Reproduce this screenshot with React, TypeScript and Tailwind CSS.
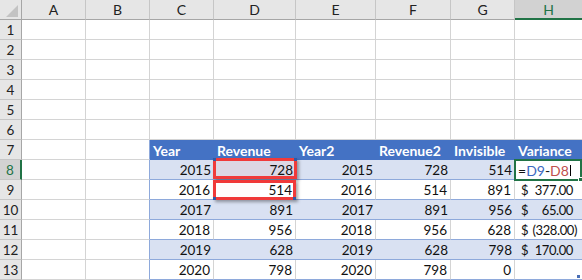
import React from "react";

type Kind = "plain" | "tblLeft" | "thead" | "band" | "white" | "d8" | "d9" | "h8";

const rows: (string | null)[][] = [
  ["Year", "Revenue", "Year2", "Revenue2", "Invisible", "Variance"],
  ["2015", "728", "2015", "728", "514", "EDIT"],
  ["2016", "514", "2016", "514", "891", "377.00"],
  ["2017", "891", "2017", "891", "956", "65.00"],
  ["2018", "956", "2018", "956", "628", "-328.00"],
  ["2019", "628", "2019", "628", "798", "170.00"],
  ["2020", "798", "2020", "798", "0", null],
];

const letters = ["A", "B", "C", "D", "E", "F", "G", "H"];

function cellClass(kind: Kind, last: boolean): string {
  switch (kind) {
    case "plain":
      return last
        ? "bg-white border-b border-[#d4d4d4]"
        : "bg-white border-r border-b border-[#d4d4d4]";
    case "tblLeft":
      return "bg-white border-b border-b-[#d4d4d4] border-r border-r-[#8ea9db]";
    case "thead":
      return "bg-[#4472c4] text-white text-[14px] font-bold justify-start pl-[3px]";
    case "band":
      return "bg-[#d9e1f2] border-b border-[#8ea9db] justify-end pr-[3px]";
    case "white":
      return last
        ? "bg-white border-b border-[#8ea9db] justify-end pr-[3px]"
        : "bg-white border-b border-b-[#8ea9db] border-r border-r-[#d4d4d4] justify-end pr-[3px]";
    case "d8":
      return "relative bg-[#dcd7e4] border-b border-[#8ea9db] justify-end pr-[3px]";
    case "d9":
      return "relative bg-white border-b border-b-[#8ea9db] border-r border-r-[#d4d4d4] justify-end pr-[3px]";
    case "h8":
      return "relative bg-white border-b border-[#8ea9db] justify-start pl-[3px]";
  }
}

function Money({ v }: { v: string }) {
  const neg = v.startsWith("-");
  const num = neg ? v.slice(1) : v;
  return (
    <div className="flex w-full items-center justify-between pl-[6px] pr-[2px] text-[13px] tracking-[-0.4px]">
      <span>$</span>
      {neg ? <span>({num})</span> : <span className="pr-[4px]">{num}</span>}
    </div>
  );
}

function RedBox({ top }: { top: boolean }) {
  return (
    <div
      className={
        top
          ? "absolute -left-px -right-px -top-[2px] bottom-0 border-[3px] border-[#f03a3a] shadow-[2px_2px_3px_rgba(0,0,0,0.35)]"
          : "absolute -left-px -right-px top-0 -bottom-px border-[3px] border-[#f03a3a] shadow-[2px_2px_3px_rgba(0,0,0,0.35)]"
      }
    >
      <div
        className={
          top
            ? "absolute -left-[3px] -top-[3px] h-[3px] w-[3px] bg-[#2e5aa8]"
            : "absolute -left-[3px] -bottom-[3px] h-[3px] w-[3px] bg-[#2e5aa8]"
        }
      />
      <div
        className={
          top
            ? "absolute -right-[3px] -top-[3px] h-[3px] w-[3px] bg-[#2e5aa8]"
            : "absolute -right-[3px] -bottom-[3px] h-[3px] w-[3px] bg-[#2e5aa8]"
        }
      />
    </div>
  );
}

export default function App() {
  const cells: React.ReactNode[] = [];

  cells.push(
    <div key="corner" className="relative bg-[#e6e6e6] border-r border-b border-[#a6a6a6]">
      <svg width="22" height="20" className="absolute left-0 top-0">
        <polygon points="18,5 18,17 6,17" fill="#c3c3c3" />
      </svg>
    </div>
  );
  letters.forEach((l) => {
    cells.push(
      <div
        key={"h" + l}
        className={
          l === "H"
            ? "flex items-center justify-center bg-[#d2d2d2] border-b-2 border-[#217346] text-[#217346] text-[14px] pt-[1px]"
            : "flex items-center justify-center bg-[#e6e6e6] border-r border-r-[#c6c6c6] border-b border-b-[#a6a6a6] text-[#222] text-[14px] pt-[1px]"
        }
      >
        {l}
      </div>
    );
  });

  for (let r = 1; r <= 13; r++) {
    cells.push(
      <div
        key={"r" + r}
        className={
          r === 8
            ? "flex items-center justify-center bg-[#d2d2d2] border-r-2 border-r-[#217346] border-b border-b-[#c6c6c6] text-[#217346] pt-[2px]"
            : "flex items-center justify-center bg-[#e6e6e6] border-r border-r-[#a6a6a6] border-b border-b-[#c6c6c6] text-[#222] pt-[2px]"
        }
      >
        {r}
      </div>
    );
    for (let c = 0; c < 8; c++) {
      const last = c === 7;
      let kind: Kind = "plain";
      let content: React.ReactNode = null;
      if (r >= 7) {
        if (c === 1) kind = "tblLeft";
        else if (c >= 2) {
          const data = rows[r - 7][c - 2];
          if (r === 7) kind = "thead";
          else if (r === 8 && c === 3) kind = "d8";
          else if (r === 9 && c === 3) kind = "d9";
          else if (r === 8 && c === 7) kind = "h8";
          else if (r % 2 === 0) kind = "band";
          else kind = "white";
          if (data === "EDIT") {
            content = (
              <>
                <span className="flex items-center text-[14px]">
                  <span>=</span>
                  <span className="text-[#3a68c0]">D9</span>
                  <span>-</span>
                  <span className="text-[#c0504d]">D8</span>
                  <span className="ml-[1px] inline-block h-[11px] w-px bg-black" />
                </span>
                <div className="absolute -left-px -top-px right-0 -bottom-[2px] border-2 border-[#217346]">
                  <div className="absolute -right-[3px] -bottom-[3px] h-[5px] w-[5px] border border-white bg-[#217346]" />
                </div>
              </>
            );
          } else if (c === 7 && r > 7 && data) {
            content = <Money v={data} />;
          } else {
            content = data;
          }
          if (kind === "d8" || kind === "d9") {
            content = (
              <>
                <span>{data}</span>
                <RedBox top={kind === "d8"} />
              </>
            );
          }
          if (r === 13 && c === 7) {
            content = (
              <div className="absolute right-[2px] bottom-[1px] h-[3px] w-[3px] bg-[#4a6fb5]" />
            );
          }
        }
      }
      cells.push(
        <div
          key={r + "-" + c}
          className={
            "flex items-center whitespace-nowrap pt-[2px] " +
            (r === 13 && c === 7 ? "relative " : "") +
            cellClass(kind, last)
          }
        >
          {content}
        </div>
      );
    }
  }

  return (
    <div className="h-[280px] w-[582px] overflow-hidden bg-white text-[13.5px] leading-none text-[#111] font-[family-name:Lato,sans-serif]">
      <div className="grid grid-cols-[22px_64px_64px_64px_82px_80px_75px_64px_67px] grid-rows-[repeat(14,20px)]">
        {cells}
      </div>
    </div>
  );
}
